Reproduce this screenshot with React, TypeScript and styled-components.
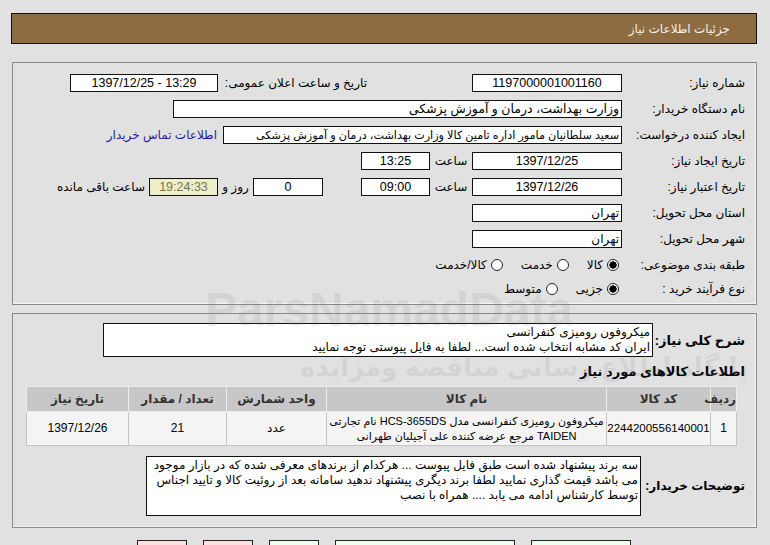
import styled, { createGlobalStyle } from 'styled-components'

const GlobalStyle = createGlobalStyle`
  html, body {
    margin: 0;
    padding: 0;
    background: #e1e1e1;
  }
  body {
    font-family: 'Liberation Sans', 'DejaVu Sans', sans-serif;
    font-size: 12px;
    color: #000;
  }
`

const Page = styled.div`
  position: relative;
  width: 770px;
  height: 545px;
  overflow: hidden;
  box-sizing: border-box;
  padding: 13px 13px 0 11px;
  direction: rtl;
`

const TitleBar = styled.div`
  height: 29px;
  border: 1px solid #111;
  background: #8c6c40;
  color: #f4efe6;
  display: flex;
  align-items: center;
  padding-right: 26px;
  font-size: 12px;
`

const Panel = styled.div<{ $top: number; $height: number }>`
  margin-top: ${(p) => p.$top}px;
  margin-left: 1px;
  height: ${(p) => p.$height}px;
  box-sizing: border-box;
  border: 1px solid #8a8a8a;
  box-shadow: inset -1px -1px 0 #f4f4f4;
  padding: 7px 11px 0 10px;
`

const Row = styled.div<{ $h?: number }>`
  display: flex;
  align-items: center;
  height: ${(p) => p.$h ?? 26}px;
  white-space: nowrap;
`

const Label = styled.div<{ $w?: number }>`
  width: ${(p) => p.$w ?? 123}px;
  flex-shrink: 0;
  text-align: right;
`

const Box = styled.div<{ $w: number; $align?: string; $tint?: boolean; $fs?: number }>`
  width: ${(p) => p.$w}px;
  height: 18px;
  box-sizing: border-box;
  flex-shrink: 0;
  border: 1px solid #111;
  background: ${(p) => (p.$tint ? '#eeeec9' : '#fff')};
  color: ${(p) => (p.$tint ? '#76764e' : '#000')};
  text-align: ${(p) => p.$align ?? 'center'};
  padding: 0 2px;
  line-height: 16px;
  overflow: hidden;
  white-space: nowrap;
  font-size: ${(p) => p.$fs ?? 12.5}px;
`

const Gap = styled.div<{ $w: number }>`
  width: ${(p) => p.$w}px;
  flex-shrink: 0;
`

const Small = styled.div<{ $w: number }>`
  width: ${(p) => p.$w}px;
  flex-shrink: 0;
  text-align: center;
`

const Link = styled.a`
  margin-right: 6px;
  color: #1d1d9e;
  text-decoration: none;
`

const RadioGroup = styled.div`
  display: flex;
  align-items: center;
  gap: 18px;
  margin-right: 3px;
`

const RadioItem = styled.label`
  display: flex;
  align-items: center;
  gap: 4px;
`

const Dot = styled.span<{ $on?: boolean }>`
  width: 12px;
  height: 12px;
  box-sizing: border-box;
  border-radius: 50%;
  border: 1.5px solid #222;
  background: ${(p) => (p.$on ? 'radial-gradient(circle, #000 0 3.4px, #fff 3.9px)' : '#fff')};
`

const BoldLabel = styled.div<{ $w: number; $fs?: number }>`
  font-weight: bold;
  font-size: ${(p) => p.$fs ?? 13}px;
  width: ${(p) => p.$w}px;
  flex-shrink: 0;
  text-align: right;
  white-space: nowrap;
`

const DescBox = styled.div<{ $w: number; $h: number }>`
  width: ${(p) => p.$w}px;
  height: ${(p) => p.$h}px;
  box-sizing: border-box;
  border: 1px solid #111;
  background: #fff;
  padding: 1px 2px;
  line-height: 15px;
  white-space: nowrap;
  overflow: hidden;
`

const TopDesc = styled.div`
  display: flex;
  align-items: center;
  margin-top: 2px;
`

const Heading = styled.div`
  font-weight: bold;
  font-size: 13px;
  margin-top: 7px;
  height: 22px;
`

const Table = styled.table`
  width: 710px;
  margin-right: 8px;
  border-collapse: collapse;
  font-size: 12px;
  table-layout: fixed;
`

const Th = styled.th`
  height: 24px;
  background: #c7c7c7;
  color: #333;
  font-weight: bold;
  border: 1px solid #ededed;
  padding: 0;
`

const Td = styled.td<{ $fs?: number }>`
  height: 33px;
  background: #f4f4f4;
  border: 1px solid #c4c4c4;
  text-align: center;
  padding: 0;
  line-height: 15px;
  white-space: nowrap;
  overflow: hidden;
  font-size: ${(p) => p.$fs ?? 12}px;
`

const NotesRow = styled.div`
  display: flex;
  align-items: center;
  margin-top: 10px;
`

const ButtonBar = styled.div`
  display: flex;
  justify-content: center;
  gap: 16px;
  margin-top: 12px;
  direction: ltr;
`

const Btn = styled.div<{ $w: number; $pink?: boolean }>`
  width: ${(p) => p.$w}px;
  height: 24px;
  box-sizing: border-box;
  border: 1px solid #222;
  background: ${(p) => (p.$pink ? '#fde0e0' : '#f0fff0')};
`

const Watermark = styled.div<{ $top: number; $left: number; $size: number }>`
  position: absolute;
  top: ${(p) => p.$top}px;
  left: ${(p) => p.$left}px;
  font-size: ${(p) => p.$size}px;
  font-weight: bold;
  color: rgba(120, 120, 120, 0.12);
  pointer-events: none;
  white-space: nowrap;
  direction: ltr;
`

const columns = [
  { title: 'ردیف', width: 26 },
  { title: 'کد کالا', width: 104 },
  { title: 'نام کالا', width: 280 },
  { title: 'واحد شمارش', width: 100 },
  { title: 'تعداد / مقدار', width: 98 },
  { title: 'تاریخ نیاز', width: 102 },
]

export default function App() {
  return (
    <Page>
      <GlobalStyle />
      <TitleBar>جزئیات اطلاعات نیاز</TitleBar>

      <Panel $top={18} $height={243}>
        <Row>
          <Label>شماره نیاز:</Label>
          <Box $w={150}>1197000001001160</Box>
          <Gap $w={105} />
          <Label $w={149}>تاریخ و ساعت اعلان عمومی:</Label>
          <Box $w={148} dir="ltr">1397/12/25 - 13:29</Box>
        </Row>
        <Row>
          <Label>نام دستگاه خریدار:</Label>
          <Box $w={449} $align="right">وزارت بهداشت، درمان و آموزش پزشکی</Box>
        </Row>
        <Row>
          <Label>ایجاد کننده درخواست:</Label>
          <Box $w={399} $align="right" $fs={11.2}>
            سعید سلطانیان مامور اداره تامین کالا وزارت بهداشت، درمان و آموزش پزشکی
          </Box>
          <Link href="#">اطلاعات تماس خریدار</Link>
        </Row>
        <Row>
          <Label>تاریخ ایجاد نیاز:</Label>
          <Box $w={150}>1397/12/25</Box>
          <Small $w={42}>ساعت</Small>
          <Box $w={69}>13:25</Box>
        </Row>
        <Row>
          <Label>تاریخ اعتبار نیاز:</Label>
          <Box $w={150}>1397/12/26</Box>
          <Small $w={42}>ساعت</Small>
          <Box $w={69}>09:00</Box>
          <Gap $w={38} />
          <Box $w={70}>0</Box>
          <Small $w={35}>روز و</Small>
          <Box $w={69} $tint>19:24:33</Box>
          <Gap $w={4} />
          <div>ساعت باقی مانده</div>
        </Row>
        <Row>
          <Label>استان محل تحویل:</Label>
          <Box $w={150} $align="right" $fs={12}>تهران</Box>
        </Row>
        <Row>
          <Label>شهر محل تحویل:</Label>
          <Box $w={150} $align="right" $fs={12}>تهران</Box>
        </Row>
        <Row $h={25}>
          <Label>طبقه بندی موضوعی:</Label>
          <RadioGroup>
            <RadioItem><Dot $on />کالا</RadioItem>
            <RadioItem><Dot />خدمت</RadioItem>
            <RadioItem><Dot />کالا/خدمت</RadioItem>
          </RadioGroup>
        </Row>
        <Row $h={23}>
          <Label>نوع فرآیند خرید :</Label>
          <RadioGroup>
            <RadioItem><Dot $on />جزیی</RadioItem>
            <RadioItem><Dot />متوسط</RadioItem>
          </RadioGroup>
        </Row>
      </Panel>

      <Panel $top={8} $height={215}>
        <TopDesc>
          <BoldLabel $w={92}>شرح کلی نیاز:</BoldLabel>
          <DescBox $w={550} $h={34}>
            میکروفون رومیزی کنفرانسی
            <br />
            ایران کد مشابه انتخاب شده است... لطفا به فایل پیوستی توجه نمایید
          </DescBox>
        </TopDesc>

        <Heading>اطلاعات کالاهای مورد نیاز</Heading>

        <Table>
          <colgroup>
            {columns.map((c) => (
              <col key={c.title} style={{ width: c.width }} />
            ))}
          </colgroup>
          <thead>
            <tr>
              {columns.map((c) => (
                <Th key={c.title}>{c.title}</Th>
              ))}
            </tr>
          </thead>
          <tbody>
            <tr>
              <Td>1</Td>
              <Td $fs={11.5}>2244200556140001</Td>
              <Td $fs={11}>
                میکروفون رومیزی کنفرانسی مدل HCS-3655DS نام تجارتی
                <br />
                TAIDEN مرجع عرضه کننده علی آجیلیان طهرانی
              </Td>
              <Td>عدد</Td>
              <Td>21</Td>
              <Td>1397/12/26</Td>
            </tr>
          </tbody>
        </Table>

        <NotesRow>
          <BoldLabel $w={104} $fs={12}>توضیحات خریدار:</BoldLabel>
          <DescBox $w={495} $h={60}>
            سه برند پیشنهاد شده است طبق فایل پیوست ... هرکدام از برندهای معرفی شده که در بازار موجود
            <br />
            می باشد قیمت گذاری نمایید لطفا برند دیگری پیشنهاد ندهید سامانه بعد از روئیت کالا و تایید اجناس
            <br />
            توسط کارشناس ادامه می یابد .... همراه با نصب
          </DescBox>
        </NotesRow>
      </Panel>

      <ButtonBar>
        <Btn $w={50} $pink />
        <Btn $w={50} $pink />
        <Btn $w={50} />
        <Btn $w={180} />
        <Btn $w={100} />
      </ButtonBar>

      <Watermark $top={282} $left={205} $size={48}>ParsNamadData</Watermark>
      <Watermark $top={352} $left={300} $size={26}>پایگاه اطلاع رسانی مناقصه ومزایده</Watermark>
    </Page>
  )
}
